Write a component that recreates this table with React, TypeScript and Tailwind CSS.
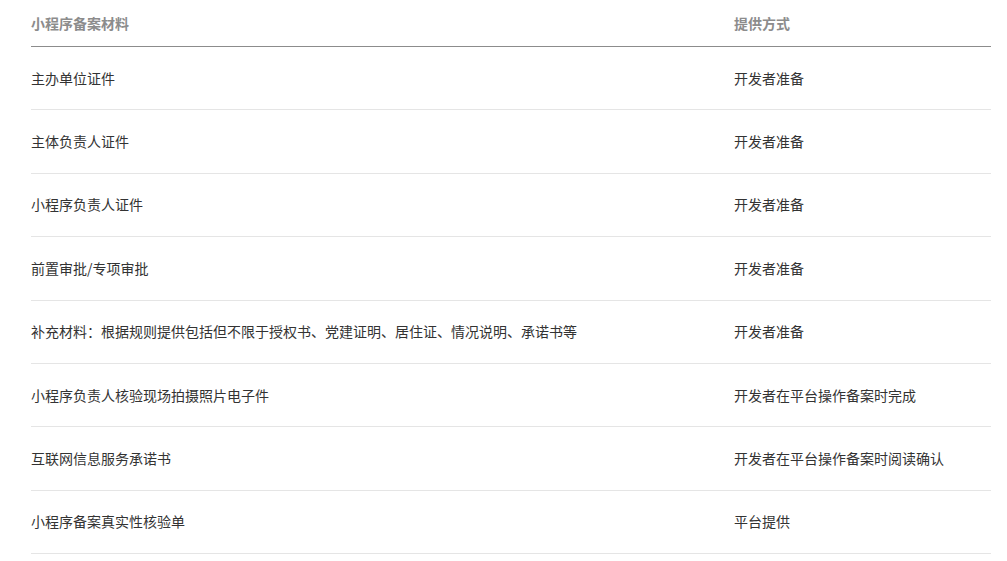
const rows: [string, string][] = [
  ["主办单位证件", "开发者准备"],
  ["主体负责人证件", "开发者准备"],
  ["小程序负责人证件", "开发者准备"],
  ["前置审批/专项审批", "开发者准备"],
  ["补充材料：根据规则提供包括但不限于授权书、党建证明、居住证、情况说明、承诺书等", "开发者准备"],
  ["小程序负责人核验现场拍摄照片电子件", "开发者在平台操作备案时完成"],
  ["互联网信息服务承诺书", "开发者在平台操作备案时阅读确认"],
  ["小程序备案真实性核验单", "平台提供"],
];

export default function App() {
  return (
    <div
      className="bg-white min-h-[561px] pl-[31px] pr-[16px]"
      style={{ fontFamily: '"Noto Sans CJK SC", "Liberation Sans", sans-serif' }}
    >
      <div className="w-[960px]">
        <div className="flex h-[47px] items-center border-b border-[#8c8c8c] text-[14px] font-bold text-[#8c8c8c]">
          <div className="w-[703px]">小程序备案材料</div>
          <div className="flex-1">提供方式</div>
        </div>
        {rows.map(([name, way]) => (
          <div
            key={name}
            className="flex h-[63.375px] items-center border-b border-[#e5e5e5] text-[14px] text-[#333333]"
          >
            <div className="w-[703px]">{name}</div>
            <div className="flex-1">{way}</div>
          </div>
        ))}
      </div>
    </div>
  );
}
